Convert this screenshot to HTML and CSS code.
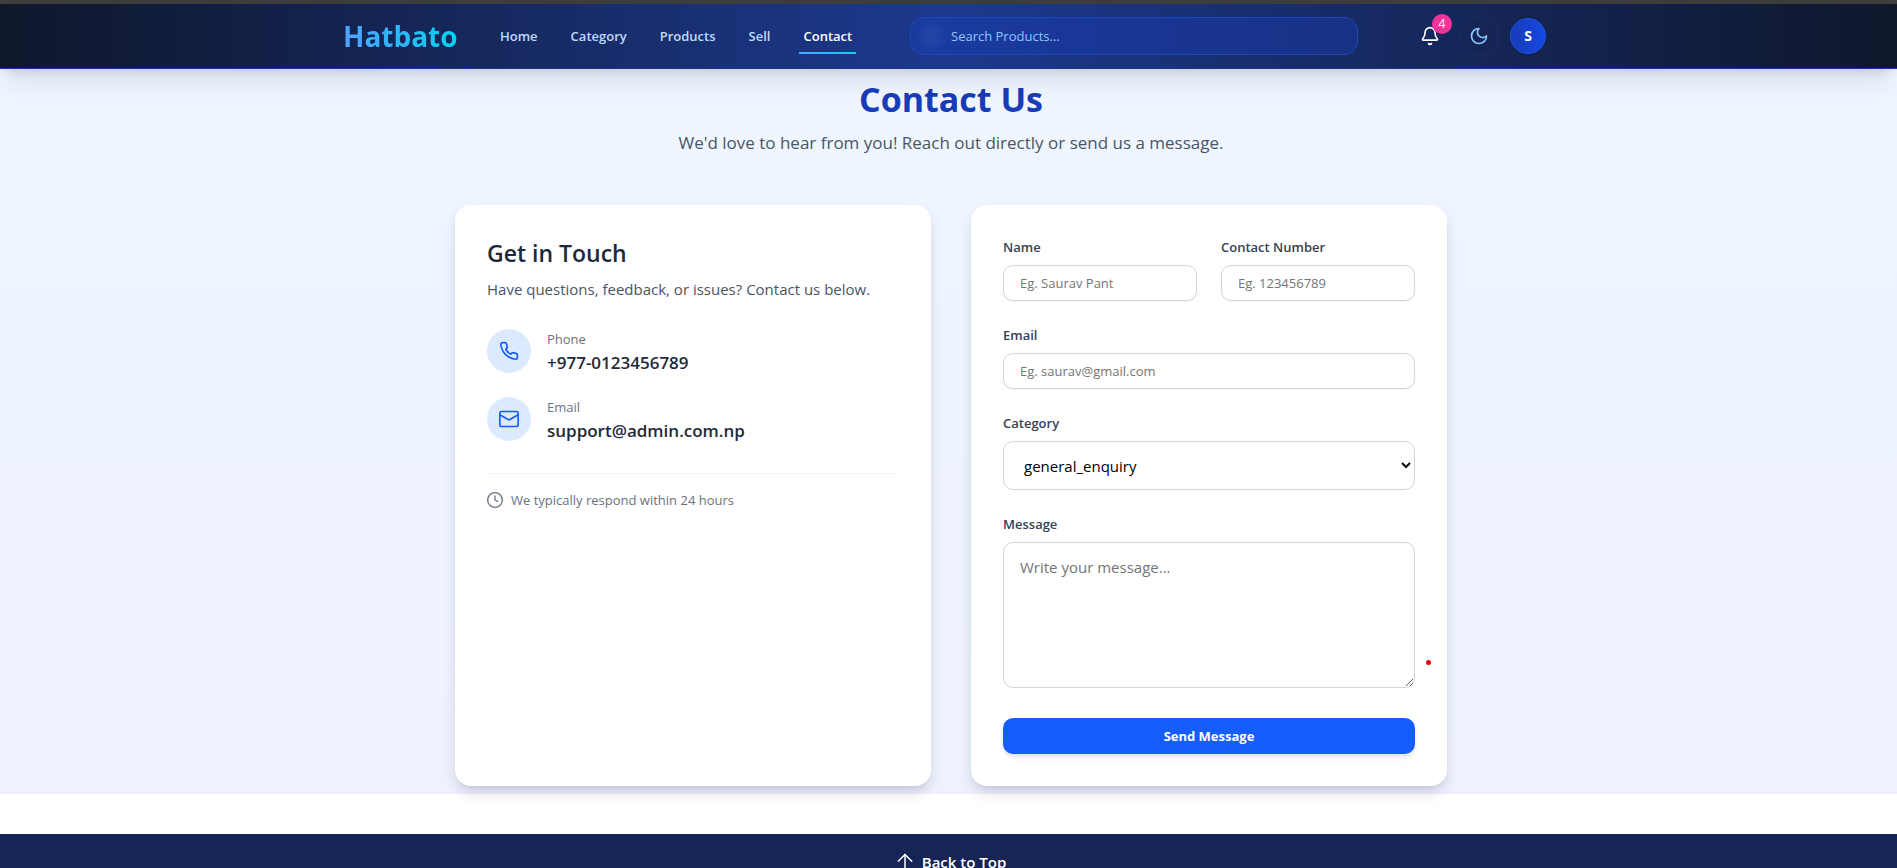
FILE: index.html
```html
<!DOCTYPE html>
<html lang="en">
<head>
<meta charset="utf-8">
<meta name="viewport" content="width=device-width, initial-scale=1">
<title>Hatbato - Contact</title>
<link rel="stylesheet" href="styles.css">
</head>
<body>
<header class="header" id="top">
  <div class="header-inner">
    <a class="logo" href="#">Hatbato</a>
    <nav class="nav" aria-label="Main">
      <a href="#">Home</a>
      <a href="#">Category</a>
      <a href="#">Products</a>
      <a href="#">Sell</a>
      <a href="#" class="active" aria-current="page">Contact</a>
    </nav>
    <input class="search" type="search" placeholder="Search Products..." aria-label="Search Products">
    <div class="actions">
      <button class="bell" type="button" aria-label="Notifications">
        <svg width="20" height="20" viewBox="0 0 24 24" fill="none" stroke="currentColor" stroke-width="2" stroke-linecap="round" stroke-linejoin="round"><path d="M10.268 21a2 2 0 0 0 3.464 0"/><path d="M3.262 15.326A1 1 0 0 0 4 17h16a1 1 0 0 0 .74-1.673C19.41 13.956 18 12.499 18 8A6 6 0 0 0 6 8c0 4.499-1.411 5.956-2.738 7.326"/></svg>
        <span class="badge">4</span>
      </button>
      <button class="theme" type="button" aria-label="Dark mode">
        <svg width="20" height="20" viewBox="0 0 24 24" fill="none" stroke="currentColor" stroke-width="2" stroke-linecap="round" stroke-linejoin="round"><path d="M12 3a6 6 0 0 0 9 9 9 9 0 1 1-9-9Z"/></svg>
      </button>
      <button class="avatar" type="button" aria-label="Account">S</button>
    </div>
  </div>
</header>
<main class="page">
  <div class="intro">
    <h1>Contact Us</h1>
    <p>We'd love to hear from you! Reach out directly or send us a message.</p>
  </div>
  <div class="cards">
    <section class="card">
      <h2>Get in Touch</h2>
      <p class="lead">Have questions, feedback, or issues? Contact us below.</p>
      <div class="contacts">
        <div class="contact">
          <span class="contact-icon"><svg width="20" height="20" viewBox="0 0 24 24" fill="none" stroke="currentColor" stroke-width="2" stroke-linecap="round" stroke-linejoin="round"><path d="M22 16.92v3a2 2 0 0 1-2.18 2 19.79 19.79 0 0 1-8.63-3.07 19.5 19.5 0 0 1-6-6 19.79 19.79 0 0 1-3.07-8.67A2 2 0 0 1 4.11 2h3a2 2 0 0 1 2 1.72 12.84 12.84 0 0 0 .7 2.81 2 2 0 0 1-.45 2.11L8.09 9.91a16 16 0 0 0 6 6l1.27-1.27a2 2 0 0 1 2.11-.45 12.84 12.84 0 0 0 2.81.7A2 2 0 0 1 22 16.92z"/></svg></span>
          <div><p class="contact-label">Phone</p><p class="contact-value">+977-0123456789</p></div>
        </div>
        <div class="contact">
          <span class="contact-icon"><svg width="20" height="20" viewBox="0 0 24 24" fill="none" stroke="currentColor" stroke-width="2" stroke-linecap="round" stroke-linejoin="round"><rect x="1" y="3" width="22" height="18" rx="2"/><path d="m23 7-9.97 5.7a1.94 1.94 0 0 1-2.06 0L1 7"/></svg></span>
          <div><p class="contact-label">Email</p><p class="contact-value">support@admin.com.np</p></div>
        </div>
      </div>
      <p class="response">
        <svg width="16" height="16" viewBox="0 0 24 24" fill="none" stroke="currentColor" stroke-width="2" stroke-linecap="round" stroke-linejoin="round"><circle cx="12" cy="12" r="11"/><path d="M12 6v6l4 2"/></svg>
        We typically respond within 24 hours
      </p>
    </section>
    <section class="card">
      <form class="form">
        <div class="row">
          <div class="field"><label for="name">Name</label><input id="name" type="text" placeholder="Eg. Saurav Pant"></div>
          <div class="field"><label for="number">Contact Number</label><input id="number" type="tel" placeholder="Eg. 123456789"></div>
        </div>
        <div class="field"><label for="email">Email</label><input id="email" type="email" placeholder="Eg. saurav@gmail.com"></div>
        <div class="field"><label for="category">Category</label><select id="category"><option>general_enquiry</option></select></div>
        <div class="field message"><label for="message">Message</label><textarea id="message" placeholder="Write your message..."></textarea></div>
        <button class="send" type="submit">Send Message</button>
      </form>
      <span class="marker"></span>
    </section>
  </div>
</main>
<footer class="footer">
  <a href="#top">
    <svg width="18" height="18" viewBox="0 0 24 24" fill="none" stroke="currentColor" stroke-width="2" stroke-linecap="round" stroke-linejoin="round"><path d="m3 11 9-9 9 9"/><path d="M12 22V2"/></svg>
    Back to Top
  </a>
</footer>
</body>
</html>
```
FILE: styles.css
```css
* { box-sizing: border-box; margin: 0; }
body {
  font-family: "Open Sans", "Noto Sans", sans-serif;
  font-size: 16px;
  line-height: 24px;
  background: #fff;
  color: #1e2939;
  overflow-x: hidden;
}
a { color: inherit; text-decoration: none; }
button, input, select, textarea { font: inherit; }
svg { flex: none; display: block; }

.header {
  position: relative;
  z-index: 1;
  border-top: 4px solid #3d3d3c;
  border-bottom: 1px solid #19369b;
  background: linear-gradient(to right, #0f172b, #1c398e, #0f172b) padding-box;
  box-shadow: 0 20px 25px -5px rgba(0, 0, 0, 0.08), 0 8px 10px -6px rgba(0, 0, 0, 0.12);
}
.header-inner {
  display: flex;
  align-items: center;
  height: 64px;
  max-width: 1285px;
  margin: 0 auto;
  padding: 0 45px 0 37px;
}
.logo {
  font-size: 28px;
  line-height: 36px;
  font-weight: 700;
  background: linear-gradient(to right, #51a2ff, #00d3f2);
  -webkit-background-clip: text;
  background-clip: text;
  color: transparent;
  width: 115px;
}
.nav {
  display: flex;
  gap: 25px;
  margin-left: 38px;
  font-size: 13px;
  line-height: 20px;
  font-weight: 600;
  color: #bedbff;
}
.nav a { padding: 6px 4px; border-bottom: 2px solid transparent; margin-top: 2px; }
.nav .active {
  color: #fff;
  border-image: linear-gradient(to right, #51a2ff, #00d3f2) 1;
}
.search {
  flex: 0 1 448px;
  min-width: 0;
  height: 38px;
  margin-left: auto;
  padding: 0 16px 0 40px;
  border: 1px solid #1a48bd;
  border-radius: 14px;
  background:
    radial-gradient(circle at 20px 18px, rgba(80, 140, 220, 0.16), transparent 18px),
    rgba(25, 60, 184, 0.4);
  color: #fff;
  font-size: 13px;
  outline: none;
}
.search::placeholder { color: #8ec5ff; opacity: 1; }
.actions { display: flex; align-items: center; gap: 12px; margin-left: 54px; }
.actions button { display: grid; place-items: center; padding: 0; }
.actions .bell { position: relative; width: 36px; height: 36px; border: 0; background: none; color: #fff; }
.badge {
  position: absolute;
  top: -4px;
  right: -4px;
  width: 20px;
  height: 20px;
  border-radius: 50%;
  background: #f6339a;
  font-size: 12px;
  line-height: 20px;
  text-align: center;
}
.theme { width: 38px; height: 38px; border: 1px solid #172b66; border-radius: 14px; background: rgba(22, 36, 86, 0.5); color: #8ec5ff; }
.avatar {
  width: 36px;
  height: 36px;
  border: 1px solid #1a52e0;
  border-radius: 50%;
  background: linear-gradient(to right, #193cb8, #1447e6);
  color: #fff;
  font-size: 14px;
  font-weight: 700;
}

.page {
  padding: 8px 0 8px 5px;
  background: linear-gradient(to bottom, #eff6ff, #eef2ff);
}
.intro { text-align: center; }
h1 { font-size: 34px; line-height: 44px; font-weight: 700; color: #193cb8; }
.intro p { margin-top: 8px; font-size: 17px; line-height: 28px; color: #4a5565; }
.cards {
  display: grid;
  grid-template-columns: 1fr 1fr;
  gap: 40px;
  max-width: 992px;
  margin: 48px auto 0;
}
.card {
  position: relative;
  padding: 32px;
  border-radius: 16px;
  background: #fff;
  box-shadow: 0 10px 15px -3px rgba(0, 0, 0, 0.1), 0 4px 6px -4px rgba(0, 0, 0, 0.1), 0 4px 14px rgba(30, 50, 120, 0.06);
}
h2 { font-size: 23px; line-height: 32px; font-weight: 600; }
.lead { margin-top: 8px; font-size: 15px; color: #4a5565; }
.contacts { display: grid; gap: 20px; margin-top: 28px; }
.contact { display: flex; gap: 16px; align-items: flex-start; }
.contact-icon {
  display: grid;
  place-items: center;
  width: 44px;
  height: 44px;
  border-radius: 50%;
  background: #dbeafe;
  color: #155dfc;
}
.contact-label { font-size: 13px; line-height: 20px; color: #6a7282; }
.contact-value { font-size: 17px; line-height: 28px; font-weight: 600; }
.response {
  display: flex;
  align-items: center;
  gap: 8px;
  margin-top: 28px;
  padding-top: 16px;
  border-top: 1px solid #f3f4f6;
  font-size: 13px;
  line-height: 20px;
  color: #6a7282;
}

.form { display: grid; gap: 24px; }
.row { display: grid; grid-template-columns: 1fr 1fr; gap: 24px; }
.field { display: grid; gap: 8px; }
.field label { font-size: 13px; line-height: 20px; font-weight: 600; color: #364153; }
.field input, .field select, .field textarea {
  width: 100%;
  min-width: 0;
  border: 1px solid #d1d5dc;
  border-radius: 10px;
  background: #fff;
}
.field input {
  height: 36px;
  padding: 0 16px;
  font-size: 13px;
  box-shadow: 0 1px 2px rgba(0, 0, 0, 0.05);
}
.field select { height: 49px; padding: 0 0 0 16px; font-size: 15px; color: #000; }
.field textarea { display: block; height: 146px; padding: 12px 16px; font-size: 15px; resize: vertical; }
.field ::placeholder { color: #757575; }
.message { padding-bottom: 6px; }
.send {
  height: 36px;
  border: 0;
  border-radius: 10px;
  background: #155dfc;
  color: #fff;
  font-size: 13px;
  font-weight: 700;
  box-shadow: 0 4px 6px -1px rgba(0, 0, 0, 0.1), 0 2px 4px -2px rgba(0, 0, 0, 0.1);
}
.marker {
  position: absolute;
  right: 16px;
  bottom: 121px;
  width: 5px;
  height: 5px;
  border-radius: 50%;
  background: #e7000b;
}

.footer {
  display: flex;
  justify-content: center;
  margin-top: 40px;
  padding: 16px 0 16px 5px;
  background: #162456;
  color: #fff;
}
.footer a { display: flex; align-items: center; gap: 8px; font-size: 15px; font-weight: 600; }
```
